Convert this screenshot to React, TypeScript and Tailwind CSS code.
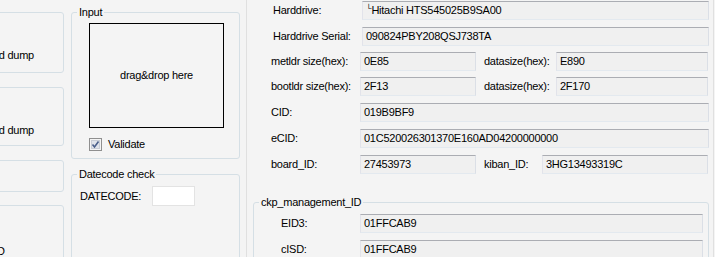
import React from "react";

const font = { fontFamily: '"Liberation Sans", Arial, sans-serif' };

function Field({ value, className }: { value?: React.ReactNode; className: string }) {
  return (
    <div
      className={`flex h-[19px] items-center border border-[#e3e9ef] border-t-[#abadb3] border-l-[#e2e3ea] border-r-[#dbdfe6] bg-[#f0f0f0] pl-[3px] text-[#000] ${className}`}
    >
      {value}
    </div>
  );
}

function Row({ label, value, top, pl }: { label: string; value: React.ReactNode; top: string; pl: string }) {
  return (
    <div className={`flex items-center ${top} ${pl} pr-[4px]`}>
      <div className="w-[89px] shrink-0">{label}</div>
      <Field value={value} className="flex-1" />
    </div>
  );
}

function SplitRow({
  label,
  value,
  label2,
  value2,
  top,
  w2,
}: {
  label: string;
  value: string;
  label2: string;
  value2: string;
  top: string;
  w2: string;
}) {
  return (
    <div className={`flex items-center ${top} pl-[24px] pr-[5px]`}>
      <div className="w-[89px] shrink-0">{label}</div>
      <Field value={value} className="w-[116px] shrink-0" />
      <div className={`ml-[8px] shrink-0 ${w2}`}>{label2}</div>
      <Field value={value2} className="flex-1" />
    </div>
  );
}

function CheckBox() {
  return (
    <svg width="13" height="13" viewBox="0 0 13 13">
      <rect x="0.5" y="0.5" width="12" height="12" fill="#f4f4f4" stroke="#8f8f8f" />
      <rect x="2.5" y="2.5" width="8" height="8" fill="#dfe3ea" stroke="#c9ced6" />
      <path d="M3.5 6.5 L5.5 9 L9.5 3.5" fill="none" stroke="#4a5f8a" strokeWidth="1.6" />
    </svg>
  );
}

export default function App() {
  return (
    <div
      className="flex h-[257px] w-[715px] overflow-hidden bg-[#f4f4f4] text-[11px] tracking-[-0.25px] text-black"
      style={font}
    >
      {/* left column, cut at the window edge */}
      <div className="w-[64px] shrink-0 overflow-hidden">
        <div className="-ml-[30px] w-[94px]">
          <div className="mt-[12px] flex h-[61px] items-end justify-end rounded-[3px] border border-[#d5dfe5] pb-[9px] pr-[29px]">
            d dump
          </div>
          <div className="mt-[14px] flex h-[59px] items-end justify-end rounded-[3px] border border-[#d5dfe5] pb-[7px] pr-[29px]">
            d dump
          </div>
          <div className="mt-[14px] h-[32px] rounded-[3px] border border-[#d5dfe5]" />
          <div className="mt-[13px] flex h-[80px] items-start rounded-[3px] border border-[#d5dfe5] pl-[26px] pt-[37px]">
            D
          </div>
        </div>
      </div>

      {/* middle column */}
      <div className="ml-[7px] w-[169px] shrink-0">
        <fieldset className="mt-[5px] h-[154px] rounded-[3px] border border-[#d5dfe5]">
          <legend className="ml-[5px] px-[2px] leading-[14px]">Input</legend>
          <div className="ml-[17px] mt-[4px] flex h-[105px] w-[135px] items-center justify-center border border-black">
            drag&amp;drop here
          </div>
          <label className="ml-[17px] mt-[8px] flex items-center gap-[6px]">
            <CheckBox />
            <span>Validate</span>
          </label>
        </fieldset>
        <fieldset className="mt-[8px] h-[120px] rounded-[3px] border border-[#d5dfe5]">
          <legend className="ml-[5px] px-[2px] leading-[14px]">Datecode check</legend>
          <div className="ml-[8px] mt-[5px] flex items-center">
            <span className="w-[72px]">DATECODE:</span>
            <div className="h-[20px] w-[43px] border border-[#e3e3e3] bg-white" />
          </div>
        </fieldset>
      </div>

      {/* right panel */}
      <div className="ml-[6px] w-[468px] shrink-0 border-x border-[#e0e0e0]">
        <Row
          label="Harddrive:"
          top="mt-[1px]"
          pl="pl-[26px]"
          value={
            <span>
              <span className="relative -top-[3px] text-[8px]">└</span>Hitachi HTS545025B9SA00
            </span>
          }
        />
        <Row label="Harddrive Serial:" top="mt-[7px]" pl="pl-[26px]" value="090824PBY208QSJ738TA" />
        <SplitRow
          label="metldr size(hex):"
          value="0E85"
          label2="datasize(hex):"
          value2="E890"
          top="mt-[6px]"
          w2="w-[72px]"
        />
        <SplitRow
          label="bootldr size(hex):"
          value="2F13"
          label2="datasize(hex):"
          value2="2F170"
          top="mt-[6px]"
          w2="w-[72px]"
        />
        <Row label="CID:" top="mt-[7px]" pl="pl-[24px]" value="019B9BF9" />
        <Row label="eCID:" top="mt-[7px]" pl="pl-[24px]" value="01C520026301370E160AD04200000000" />
        <SplitRow
          label="board_ID:"
          value="27453973"
          label2="kiban_ID:"
          value2="3HG13493319C"
          top="mt-[7px]"
          w2="w-[58px]"
        />
        <fieldset className="ml-[6px] mr-[4px] mt-[21px] h-[80px] rounded-[3px] border border-[#d5dfe5] pr-[5px]">
          <legend className="ml-[5px] px-[2px] leading-[14px]">ckp_management_ID</legend>
          <div className="mt-[5px] flex items-center pl-[27px]">
            <div className="w-[79px] shrink-0">EID3:</div>
            <Field value="01FFCAB9" className="flex-1" />
          </div>
          <div className="mt-[7px] flex items-center pl-[27px]">
            <div className="w-[79px] shrink-0">cISD:</div>
            <Field value="01FFCAB9" className="flex-1" />
          </div>
        </fieldset>
      </div>
    </div>
  );
}
